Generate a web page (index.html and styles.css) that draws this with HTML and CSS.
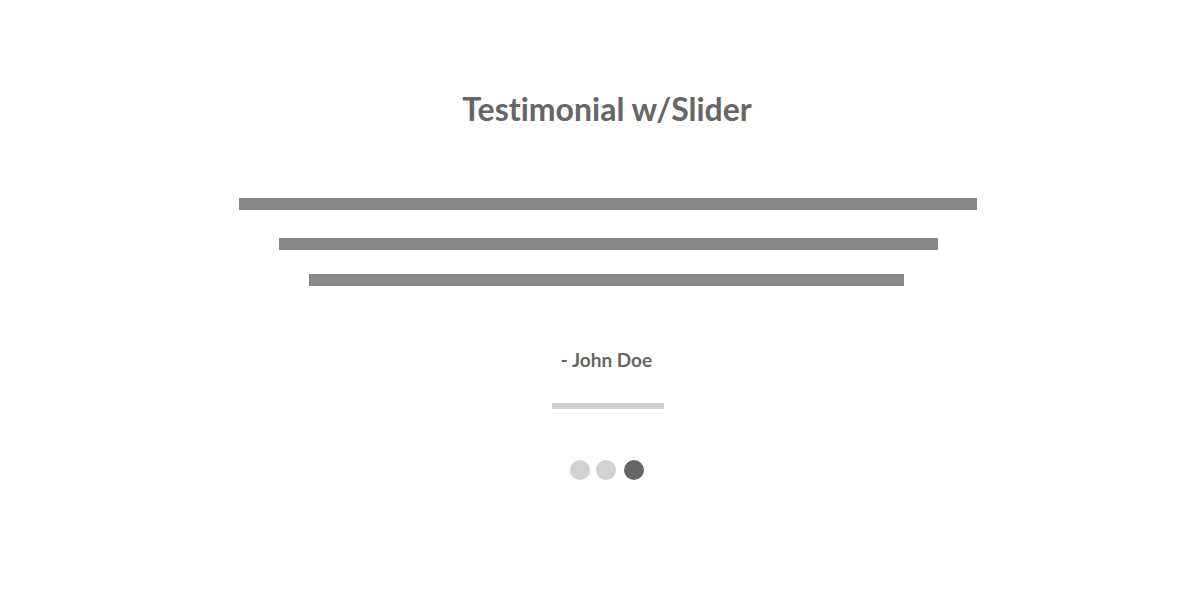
FILE: index.html
```html
<!DOCTYPE html>
<html>
<head>
<meta charset="utf-8">
<link rel="stylesheet" href="styles.css">
</head>
<body>
<section class="testimonial">
  <h1 class="title">Testimonial w/Slider</h1>
  <div class="quote">
    <div class="line line-1"></div>
    <div class="line line-2"></div>
    <div class="line line-3"></div>
  </div>
  <p class="author">- John Doe</p>
  <div class="underline"></div>
  <div class="dots">
    <span class="dot"></span>
    <span class="dot"></span>
    <span class="dot active"></span>
  </div>
</section>
</body>
</html>
```
FILE: styles.css
```css
html, body {
  margin: 0;
  padding: 0;
  background: #ffffff;
}
body {
  width: 1200px;
  height: 592px;
  overflow: hidden;
  font-family: "Lato", "Open Sans", sans-serif;
}
.testimonial {
  display: flex;
  flex-direction: column;
  align-items: center;
  padding-left: 15px;
  padding-top: 90px;
}
.title {
  margin: 0;
  font-size: 32px;
  line-height: 38px;
  font-weight: 700;
  color: #666666;
  font-variant-ligatures: none;
  font-feature-settings: "liga" 0;
  margin-left: -1px;
}
.quote {
  margin-top: 70px;
  display: flex;
  flex-direction: column;
  align-items: center;
}
.line {
  height: 12px;
  background: #888888;
}
.line-1 { width: 738px; }
.line-2 { width: 659px; margin-top: 28px; margin-left: 2px; }
.line-3 { width: 595px; margin-top: 24px; margin-left: -3px; }
.author {
  margin: 62px 0 0;
  font-size: 19px;
  line-height: 24px;
  font-weight: 700;
  color: #666666;
  margin-left: -2px;
}
.underline {
  margin-top: 31px;
  width: 112px;
  height: 6px;
  background: #d2d2d2;
}
.dots {
  margin-top: 51px;
  margin-left: -2px;
  display: flex;
  gap: 6px;
}
.dot {
  width: 20px;
  height: 20px;
  border-radius: 50%;
  background: #d2d2d2;
}
.dot.active {
  background: #666666;
  margin-left: 2px;
}
```
